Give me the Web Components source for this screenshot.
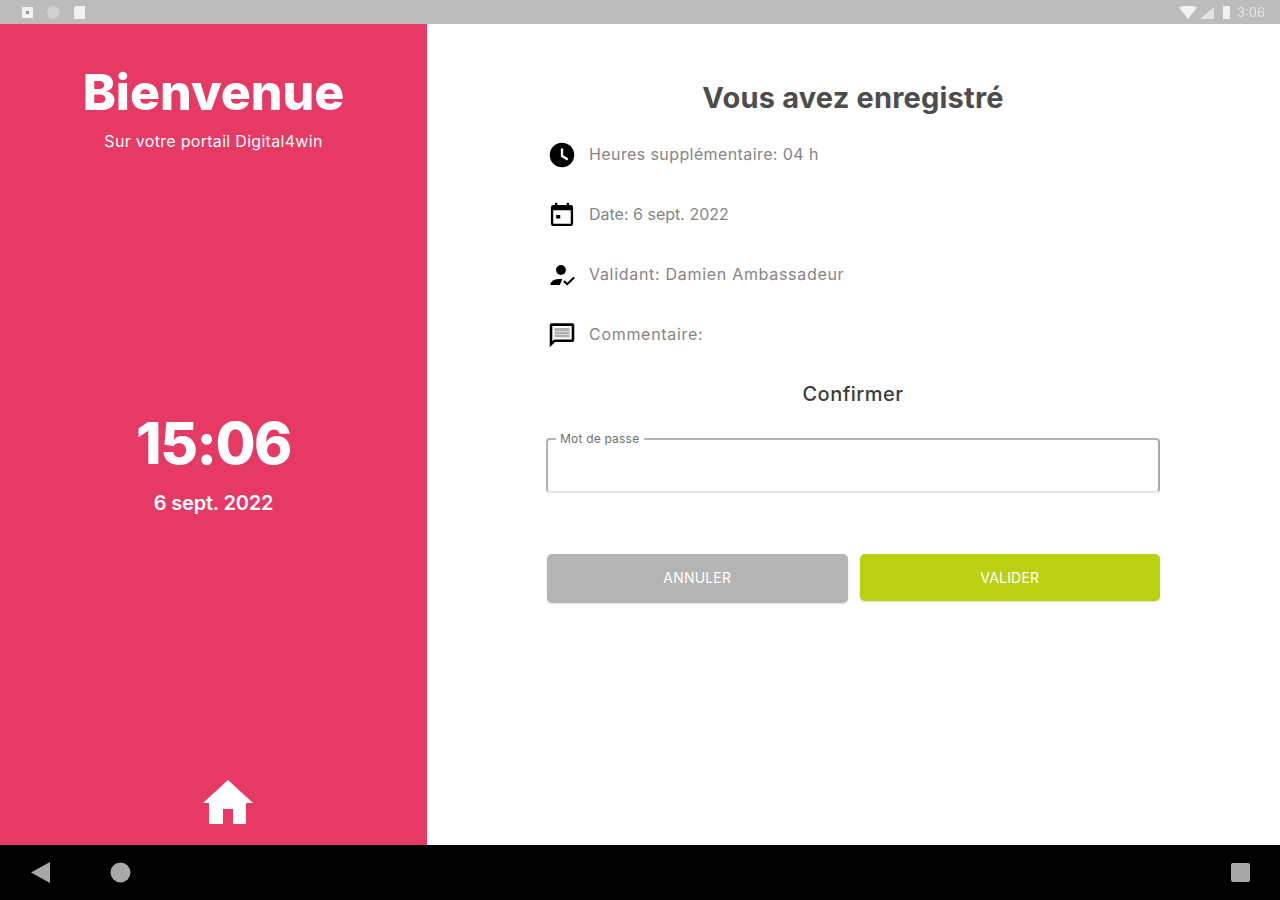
<!DOCTYPE html>
<html lang="fr">
<head>
<meta charset="utf-8">
<title>Digital4win</title>
<style>
  html, body { margin: 0; height: 100%; }
  body { font-family: Inter, "Liberation Sans", sans-serif; overflow: hidden; }
  app-shell { height: 900px; }
</style>
</head>
<body>
<app-shell>
  <status-bar slot="status"></status-bar>
  <welcome-panel slot="side" time="15:06" date="6 sept. 2022"></welcome-panel>
  <confirm-panel slot="main">
    <info-row icon="clock">Heures supplémentaire: 04 h</info-row>
    <info-row icon="calendar" style="--row-ls:0">Date: 6 sept. 2022</info-row>
    <info-row icon="approver" style="--row-ls:.7px">Validant: Damien Ambassadeur</info-row>
    <info-row icon="comment" style="--row-ls:.7px">Commentaire:</info-row>
  </confirm-panel>
  <nav-bar slot="nav"></nav-bar>
</app-shell>

<script>
const ICONS = {
  clock: '<path d="M12 1.500a10.500 10.500 0 1 0 0 21 10.500 10.500 0 0 0 0-21zm4.400 15.200L11 13.400V6.500h2v5.800l4.500 2.700z"/>',
  calendar: '<path d="M19.500 3.500H18v-2h-2v2H8v-2H6v2H4.500a2 2 0 0 0-2 2v14a2 2 0 0 0 2 2h15a2 2 0 0 0 2-2v-14a2 2 0 0 0-2-2zm0 16h-15V8h15zM7 12h3.500v3H7z"/>',
  approver: '<circle cx="11.100" cy="7.700" r="4.200"/><path d="M2 20.600c0-3 3-5 7-5.200h3.200l-2 5.200z"/><path d="M13 17.800l1.200-1.200 2.200 2.100 5.400-5.200 1.200 1.200-6.600 6.200z"/>',
  comment: '<path d="M21 2H3A1.500 1.500 0 0 0 1.500 3.500v19L6 18h15a1.500 1.500 0 0 0 1.500-1.500v-13A1.500 1.500 0 0 0 21 2zm-.700 13.800H5.200l-1.500 1.500V4.200h16.600z"/><path d="M5.500 6h13v8h-13z" fill="#b0b0b0"/><path d="M5.500 8.600h13v.700h-13zm0 2.700h13v.700h-13z" fill="#e8e8e8"/>'
};

class AppShell extends HTMLElement {
  constructor() {
    super();
    this.attachShadow({ mode: 'open' }).innerHTML = `
      <style>
        :host { display: flex; flex-direction: column; width: 1280px; }
        .content { flex: 1; display: flex; min-height: 0; }
      </style>
      <slot name="status"></slot>
      <div class="content">
        <slot name="side"></slot>
        <slot name="main"></slot>
      </div>
      <slot name="nav"></slot>
    `;
  }
}

class StatusBar extends HTMLElement {
  constructor() {
    super();
    this.attachShadow({ mode: 'open' }).innerHTML = `
      <style>
        :host { display: flex; align-items: center; justify-content: space-between; height: 24px; padding: 0 15px 0 21px; background: #bcbcbc; box-sizing: border-box; flex: none; }
        .group { display: flex; align-items: center; }
        .left { gap: 12px; }
        svg { display: block; fill: #f2f2f2; filter: blur(.6px); }
        .signal { margin-left: 3px; opacity: .7; }
        .battery { margin-left: 8px; }
        .time { font-size: 13px; color: #e6e6e6; margin-left: 6px; filter: blur(.6px); }
      </style>
      <div class="group left">
        <svg width="13" height="13" viewBox="0 0 13 13"><path d="M1 1h11v11H1z"/><path d="M5 5h3v3H5z" fill="#9a9a9a"/></svg>
        <svg width="15" height="15" viewBox="0 0 15 15"><circle cx="7.500" cy="7.500" r="6.500" fill="#d0d0d0"/></svg>
        <svg width="13" height="15" viewBox="0 0 13 15"><path d="M3 1h9v13H1V3z"/></svg>
      </div>
      <div class="group right">
        <svg width="18" height="13" viewBox="0 0 18 13"><path d="M0 1.500Q9-2 18 1.500L9 13z"/></svg>
        <svg class="signal" width="14" height="13" viewBox="0 0 14 13"><path d="M0 13L14 1v12z"/></svg>
        <svg class="battery" width="9" height="14" viewBox="0 0 9 14"><path d="M1 1h7v13H1z"/></svg>
        <span class="time">3:06</span>
      </div>
    `;
  }
}

class WelcomePanel extends HTMLElement {
  constructor() {
    super();
    this.attachShadow({ mode: 'open' });
  }

  connectedCallback() {
    this.shadowRoot.innerHTML = `
      <style>
        :host { display: flex; flex-direction: column; align-items: center; width: 427px; flex: none; background: #e63964; color: #fff; text-align: center; box-sizing: border-box; }
        h1 { margin: 39px 0 0; font-size: 50px; line-height: 58px; font-weight: 800; letter-spacing: 0; }
        .sub { margin-top: 10px; font-size: 16px; line-height: 20px; letter-spacing: .3px; }
        .clock { margin-top: 256px; font-size: 58px; line-height: 72px; font-weight: 800; letter-spacing: -1.500px; }
        .date { margin-top: 11px; font-size: 20px; line-height: 26px; font-weight: 600; letter-spacing: -.2px; }
        svg { display: block; margin: auto 0 21px 29px; fill: #fff; }
      </style>
      <h1>Bienvenue</h1>
      <div class="sub">Sur votre portail Digital4win</div>
      <div class="clock">${this.getAttribute('time')}</div>
      <div class="date">${this.getAttribute('date')}</div>
      <svg width="50" height="44" viewBox="0 0 50 44"><path d="M25 0L50 23H43V44H30V29H20V44H6V23H0z"/></svg>
    `;
  }
}

class InfoRow extends HTMLElement {
  constructor() {
    super();
    this.attachShadow({ mode: 'open' });
  }

  connectedCallback() {
    const icon = ICONS[this.getAttribute('icon')] || '';
    this.shadowRoot.innerHTML = `
      <style>
        :host { display: flex; align-items: center; gap: 13px; height: 30px; margin-left: 2px; color: #858585; font-size: 16px; letter-spacing: var(--row-ls, .4px); }
        svg { width: 28px; height: 28px; fill: #000; flex: none; }
        span { margin-bottom: 2px; }
      </style>
      <svg viewBox="0 0 24 24">${icon}</svg>
      <span><slot></slot></span>
    `;
  }
}

class PasswordField extends HTMLElement {
  constructor() {
    super();
    this.attachShadow({ mode: 'open' }).innerHTML = `
      <style>
        :host { display: block; }
        fieldset { margin: 0; padding: 0 0 0 8px; height: 60px; box-sizing: border-box; border: 2px solid #b2b2b2; border-bottom-color: #e4e4e4; border-right-color: #a8a8a8; border-radius: 4px; }
        legend { padding: 0 5px 0 4px; font-size: 12px; line-height: 12px; letter-spacing: .2px; color: #707070; }
      </style>
      <fieldset><legend><slot></slot></legend></fieldset>
    `;
  }
}

class ActionButton extends HTMLElement {
  constructor() {
    super();
    this.attachShadow({ mode: 'open' }).innerHTML = `
      <style>
        :host { flex: 1; display: flex; align-items: center; justify-content: center; box-sizing: border-box; height: var(--btn-h, 49px); padding-bottom: var(--btn-pb, 2px); border-radius: 5px; color: #fff; font-size: 14px; background: var(--btn-bg, #b4b4b4); box-shadow: 0 1px 2px rgba(0,0,0,.15); letter-spacing: .2px; }
      </style>
      <slot></slot>
    `;
  }
}

class ConfirmPanel extends HTMLElement {
  constructor() {
    super();
    this.attachShadow({ mode: 'open' }).innerHTML = `
      <style>
        :host { flex: 1; display: flex; flex-direction: column; background: #fff; padding: 0 120px 0 119px; }
        h2 { margin: 54px 0 0; text-align: center; font-size: 29px; line-height: 40px; font-weight: 700; color: #4d4d4d; letter-spacing: .2px; }
        .rows { display: flex; flex-direction: column; gap: 30px; margin-top: 22px; }
        h3 { margin: 29px 0 0; text-align: center; font-size: 20px; line-height: 30px; font-weight: 500; color: #3c3c3c; letter-spacing: .5px; }
        password-field { margin-top: 24px; }
        .actions { display: flex; align-items: flex-start; gap: 12px; margin: 61px 0 0 1px; }
      </style>
      <h2>Vous avez enregistré</h2>
      <div class="rows"><slot></slot></div>
      <h3>Confirmer</h3>
      <password-field>Mot de passe</password-field>
      <div class="actions">
        <action-button>ANNULER</action-button>
        <action-button style="--btn-bg:#bcd012;--btn-h:47px;--btn-pb:0">VALIDER</action-button>
      </div>
    `;
  }
}

class NavBar extends HTMLElement {
  constructor() {
    super();
    this.attachShadow({ mode: 'open' }).innerHTML = `
      <style>
        :host { display: flex; align-items: center; height: 55px; background: #000; flex: none; padding: 0 30px 0 31px; }
        svg { display: block; fill: #a8a8a8; filter: blur(.5px); }
        .home { margin-left: 60px; }
        .recent { margin-left: auto; }
      </style>
      <svg width="19" height="21" viewBox="0 0 19 21"><path d="M19 0v21L0 10.500z"/></svg>
      <svg class="home" width="21" height="21" viewBox="0 0 21 21"><circle cx="10.500" cy="10.500" r="10"/></svg>
      <svg class="recent" width="19" height="19" viewBox="0 0 19 19"><rect width="19" height="19" rx="2"/></svg>
    `;
  }
}

customElements.define('app-shell', AppShell);
customElements.define('status-bar', StatusBar);
customElements.define('welcome-panel', WelcomePanel);
customElements.define('info-row', InfoRow);
customElements.define('password-field', PasswordField);
customElements.define('action-button', ActionButton);
customElements.define('confirm-panel', ConfirmPanel);
customElements.define('nav-bar', NavBar);
</script>
</body>
</html>
